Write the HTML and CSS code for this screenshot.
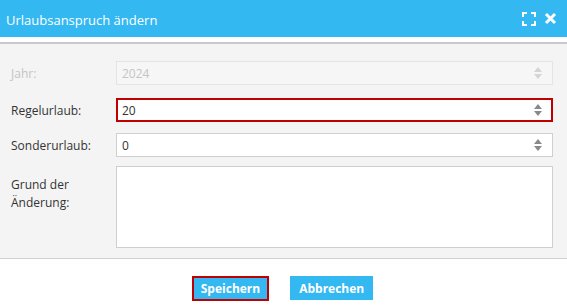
FILE: index.html
```html
<!DOCTYPE html>
<html>
<head>
<meta charset="utf-8">
<link rel="stylesheet" href="styles.css">
</head>
<body>
<div class="dialog">
  <div class="header">
    <span class="title">Urlaubsanspruch ändern</span>
    <span class="tools">
      <svg width="14" height="14" viewBox="0 0 14 14" class="ico">
        <path d="M1 5V1h4M9 1h4v4M13 9v4H9M5 13H1V9" fill="none" stroke="#fff" stroke-width="2"/>
      </svg>
      <svg width="13" height="13" viewBox="0 0 13 13" class="ico">
        <path d="M2 2l9 9M11 2l-9 9" fill="none" stroke="#fff" stroke-width="3"/>
      </svg>
    </span>
  </div>
  <div class="gap"></div>
  <div class="body">
    <div class="row">
      <label class="lbl disabled">Jahr:</label>
      <div class="field disabled-field"><span class="val">2024</span><span class="spin light"></span></div>
    </div>
    <div class="row">
      <label class="lbl">Regelurlaub:</label>
      <div class="field error"><span class="val">20</span><span class="spin"></span></div>
    </div>
    <div class="row">
      <label class="lbl">Sonderurlaub:</label>
      <div class="field"><span class="val">0</span><span class="spin"></span></div>
    </div>
    <div class="row tall">
      <label class="lbl">Grund der<br>Änderung:</label>
      <div class="area"></div>
    </div>
  </div>
  <div class="footer">
    <button class="btn primary">Speichern</button>
    <button class="btn">Abbrechen</button>
  </div>
</div>
</body>
</html>
```
FILE: styles.css
```css
* { box-sizing: border-box; }
html, body { margin: 0; padding: 0; background: #fff; }
body { font-family: "Open Sans", "Noto Sans", sans-serif; width: 567px; height: 308px; overflow: hidden; }
.dialog { display: flex; flex-direction: column; height: 308px; }
.header {
  height: 37px; background: #33b8f2; color: #fff;
  display: flex; align-items: center; justify-content: space-between;
  padding: 0 10px 0 6px;
}
.title { font-size: 13px; position: relative; top: 1px; }
.tools { display: flex; align-items: center; gap: 8px; }
.ico { display: block; }
.gap { height: 7px; background: #fff; border-bottom: 2px solid #c9c9c9; }
.body {
  background: #f4f4f4; height: 215px; border-bottom: 1px solid #d0d0d0;
  padding: 17px 14px 0 11px;
  display: flex; flex-direction: column;
}
.row { display: flex; align-items: center; height: 24px; margin-bottom: 13px; }
.row:nth-child(2) { margin-bottom: 11px; }
.row.tall { align-items: flex-start; height: 82px; margin-top: -4px; margin-bottom: 0; }
.lbl { width: 105px; font-size: 12px; color: #333; flex: none; }
.row.tall .lbl { padding-top: 10px; line-height: 18px; }
.lbl.disabled { color: #c4c4c4; }
.field {
  flex: 1; height: 24px; background: #fff; border: 1px solid #cfcfcf;
  display: flex; align-items: center; justify-content: space-between;
  padding: 0 10px 0 5px; font-size: 12px; color: #333;
}
.field.error { border: 2px solid #c00000; padding-left: 4px; padding-right: 9px; }
.disabled-field { background: #f6f6f6; border-color: #e4e4e4; color: #c4c4c4; }
.spin { position: relative; width: 8px; height: 12px; }
.spin::before, .spin::after {
  content: ""; position: absolute; left: 0; width: 0; height: 0;
  border-left: 4px solid transparent; border-right: 4px solid transparent;
}
.spin::before { top: 0; border-bottom: 5px solid #8a8a8a; }
.spin::after { bottom: 0; border-top: 5px solid #8a8a8a; }
.spin.light::before { border-bottom-color: #d4d4d4; }
.spin.light::after { border-top-color: #d4d4d4; }
.area { flex: 1; height: 82px; background: #fff; border: 1px solid #cfcfcf; }
.footer {
  flex: 1; display: flex; justify-content: center; align-items: flex-start;
  padding-top: 17px; gap: 21px; padding-right: 2px;
}
.btn {
  font-family: "Open Sans", "Noto Sans", sans-serif; font-weight: bold; font-size: 12px;
  background: #33b8f2; color: #fff; border: 1px solid #33b8f2;
  height: 24px; padding: 0 8px; margin: 0;
}
.btn.primary { border: 2px solid #c00000; padding: 0 7px; height: 25px; }
```
